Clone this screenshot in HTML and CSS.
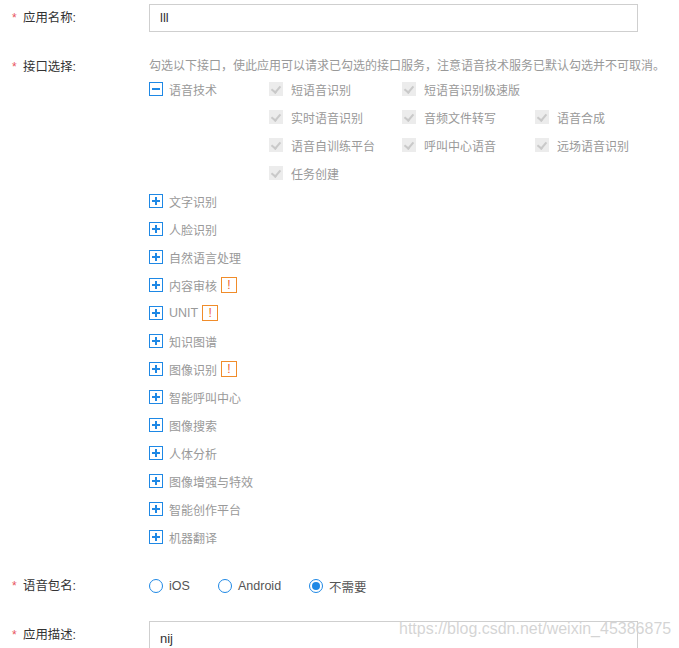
FILE: index.html
```html
<!DOCTYPE html>
<html lang="zh">
<head>
<meta charset="utf-8">
<title>创建应用</title>
<link rel="stylesheet" href="styles.css">
</head>
<body>
<div class="form">
  <div class="row row-name">
    <div class="label"><span class="req">*</span>应用名称:</div>
    <div class="field"><div class="input">lll</div></div>
  </div>

  <div class="row row-api">
    <div class="label"><span class="req">*</span>接口选择:</div>
    <div class="field">
      <div class="desc">勾选以下接口，使此应用可以请求已勾选的接口服务，注意语音技术服务已默认勾选并不可取消。</div>
      <div class="tree">
        <div class="node expanded">
          <div class="node-head">
            <span class="tog minus"></span><span class="node-text">语音技术</span>
          </div>
          <div class="children">
            <label class="cb"><span class="box"></span>短语音识别</label>
            <label class="cb"><span class="box"></span>短语音识别极速版</label>
            <span class="cb empty"></span>
            <label class="cb"><span class="box"></span>实时语音识别</label>
            <label class="cb"><span class="box"></span>音频文件转写</label>
            <label class="cb"><span class="box"></span>语音合成</label>
            <label class="cb"><span class="box"></span>语音自训练平台</label>
            <label class="cb"><span class="box"></span>呼叫中心语音</label>
            <label class="cb"><span class="box"></span>远场语音识别</label>
            <label class="cb"><span class="box"></span>任务创建</label>
          </div>
        </div>
        <div class="node"><span class="tog plus"></span><span class="node-text">文字识别</span></div>
        <div class="node"><span class="tog plus"></span><span class="node-text">人脸识别</span></div>
        <div class="node"><span class="tog plus"></span><span class="node-text">自然语言处理</span></div>
        <div class="node"><span class="tog plus"></span><span class="node-text">内容审核</span><span class="warn">!</span></div>
        <div class="node"><span class="tog plus"></span><span class="node-text latin">UNIT</span><span class="warn">!</span></div>
        <div class="node"><span class="tog plus"></span><span class="node-text">知识图谱</span></div>
        <div class="node"><span class="tog plus"></span><span class="node-text">图像识别</span><span class="warn">!</span></div>
        <div class="node"><span class="tog plus"></span><span class="node-text">智能呼叫中心</span></div>
        <div class="node"><span class="tog plus"></span><span class="node-text">图像搜索</span></div>
        <div class="node"><span class="tog plus"></span><span class="node-text">人体分析</span></div>
        <div class="node"><span class="tog plus"></span><span class="node-text">图像增强与特效</span></div>
        <div class="node"><span class="tog plus"></span><span class="node-text">智能创作平台</span></div>
        <div class="node"><span class="tog plus"></span><span class="node-text">机器翻译</span></div>
      </div>
    </div>
  </div>

  <div class="row row-pkg">
    <div class="label"><span class="req">*</span>语音包名:</div>
    <div class="field radios">
      <label class="radio r-ios"><span class="dot"></span>iOS</label>
      <label class="radio r-android"><span class="dot"></span>Android</label>
      <label class="radio checked"><span class="dot"></span>不需要</label>
    </div>
  </div>

  <div class="row row-desc">
    <div class="label"><span class="req">*</span>应用描述:</div>
    <div class="field"><div class="textarea">nij</div></div>
  </div>
</div>
<div class="watermark">https://blog.csdn.net/weixin_45386875</div>
</body>
</html>
```

FILE: styles.css
```css
html, body {
  margin: 0;
  padding: 0;
  background: #fff;
  overflow: hidden;
}
body {
  width: 679px;
  height: 648px;
  position: relative;
  font-family: "Liberation Sans", "Noto Sans CJK SC", sans-serif;
  font-size: 12px;
  color: #333;
}
.form {
  padding-left: 12px;
  padding-top: 4px;
}
.row {
  display: flex;
  align-items: flex-start;
}
.label {
  width: 137px;
  flex: none;
  font-size: 12.4px;
  color: #333;
  line-height: 28px;
  white-space: nowrap;
}
.req {
  color: #e8545e;
  display: inline-block;
  width: 11px;
  font-size: 12px;
}
.field {
  flex: 1;
}
.input {
  width: 477px;
  height: 26px;
  border: 1px solid #cfcfcf;
  line-height: 26px;
  padding-left: 10px;
  box-sizing: content-box;
  font-size: 13px;
  color: #333;
}
.row-api {
  margin-top: 24px;
}
.row-api .label {
  line-height: 28px;
  margin-top: -3px;
}
.desc {
  color: #999;
  font-size: 12px;
  line-height: 20px;
  white-space: nowrap;
}
.tree {
  margin-top: -1px;
}
.node {
  display: flex;
  align-items: center;
  height: 28px;
}
.node.expanded {
  display: flex;
  align-items: flex-start;
  height: auto;
}
.node-head {
  display: flex;
  align-items: center;
  height: 28px;
  width: 120px;
  flex: none;
}
.tog {
  width: 12px;
  height: 12px;
  border: 1px solid #1e88e5;
  position: relative;
  flex: none;
  margin-right: 6px;
}
.tog::before {
  content: "";
  position: absolute;
  left: 2px;
  right: 2px;
  top: 5px;
  height: 2px;
  background: #1e88e5;
}
.tog.plus::after {
  content: "";
  position: absolute;
  top: 2px;
  bottom: 2px;
  left: 5px;
  width: 2px;
  background: #1e88e5;
}
.node-text {
  color: #999;
  font-size: 12px;
  white-space: nowrap;
}
.node-text.latin {
  font-size: 12.5px;
}
.warn {
  display: inline-flex;
  align-items: center;
  justify-content: center;
  width: 14px;
  height: 14px;
  border: 1px solid #f08c2a;
  color: #f0612a;
  font-size: 12px;
  font-weight: normal;
  margin-left: 4px;
  line-height: 1;
}
.children {
  display: grid;
  grid-template-columns: 133px 133px 133px;
  grid-auto-rows: 28px;
}
.cb {
  display: flex;
  align-items: center;
  color: #999;
  font-size: 12px;
  white-space: nowrap;
}
.box {
  width: 14px;
  height: 14px;
  background: #ececec;
  margin-right: 8px;
  position: relative;
  flex: none;
}
.box::after {
  content: "";
  position: absolute;
  left: 4px;
  top: 2px;
  width: 4px;
  height: 7px;
  border-right: 2px solid #c9c9c9;
  border-bottom: 2px solid #c9c9c9;
  transform: rotate(40deg);
}
.row-pkg {
  margin-top: 21px;
}
.radios {
  display: flex;
  align-items: center;
  height: 28px;
}
.radio {
  display: flex;
  align-items: center;
  color: #555;
  font-size: 12.5px;
  white-space: nowrap;
}
.r-ios {
  width: 69px;
}
.r-android {
  width: 91px;
}
.dot {
  width: 12px;
  height: 12px;
  border: 1px solid #1e88e5;
  border-radius: 50%;
  margin-right: 6px;
  position: relative;
  flex: none;
}
.radio.checked .dot::after {
  content: "";
  position: absolute;
  left: 2px;
  top: 2px;
  width: 8px;
  height: 8px;
  border-radius: 50%;
  background: #1e88e5;
}
.row-desc {
  margin-top: 21px;
}
.textarea {
  width: 467px;
  height: 60px;
  border: 1px solid #cfcfcf;
  padding: 7px 10px 0;
  font-size: 13px;
  color: #333;
  line-height: 20px;
  box-sizing: content-box;
}
.watermark {
  position: absolute;
  left: 399px;
  top: 620px;
  font-family: "Liberation Sans", Arial, sans-serif;
  font-size: 16px;
  color: rgba(205, 205, 205, 0.85);
  text-shadow: 0 0 1px rgba(255,255,255,0.6);
  white-space: nowrap;
}
```
